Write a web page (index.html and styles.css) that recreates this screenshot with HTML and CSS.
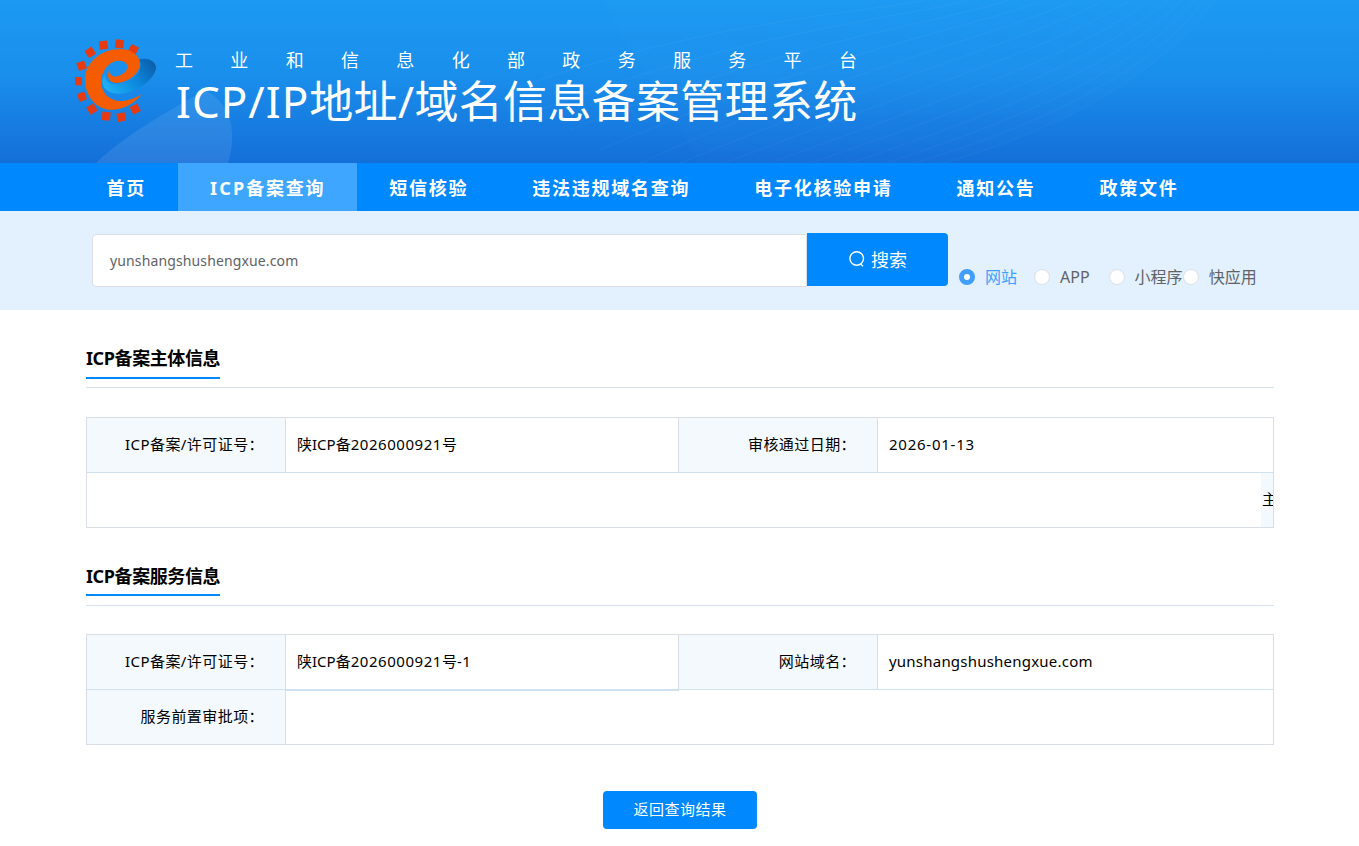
FILE: index.html
```html
<!DOCTYPE html>
<html lang="zh-CN">
<head>
    <meta charset="UTF-8">
    <title>ICP/IP地址/域名信息备案管理系统</title>
    <link rel="stylesheet" href="styles.css">
</head>
<body>
    <header class="banner">
        <svg class="banner-waves" viewBox="0 0 1359 163">
            <path d="M96 163 C125 135 170 110 205 90 C225 100 240 125 228 163 Z" fill="#fff" opacity="0.09"/>
            <path d="M1215 0 C1160 75 1060 130 943 163 L700 163 L600 0 Z" fill="#fff" opacity="0.012"/>
            <g fill="none" stroke="#fff" stroke-opacity="0.04">
                <path d="M1215 0 C1160 75 1060 130 943 163"/>
                <path d="M1205 0 C1150 70 1050 122 915 163"/>
                <path d="M1195 0 C1140 65 1035 115 885 163"/>
                <path d="M1182 0 C1125 60 1015 108 850 163"/>
                <path d="M1168 0 C1105 55 995 100 810 163"/>
                <path d="M1150 0 C1085 50 970 90 770 163"/>
                <path d="M1130 0 C1060 45 940 80 725 163"/>
                <path d="M1105 0 C1030 40 905 70 680 163"/>
                <path d="M1075 0 C1000 35 870 60 640 163"/>
                <path d="M1045 0 C965 30 830 50 600 150"/>
                <path d="M1010 0 C930 25 790 40 570 130"/>
                <path d="M970 0 C890 20 750 30 540 110"/>
                <path d="M925 0 C850 15 710 20 510 90"/>
            </g>
        </svg>
        <svg class="logo" viewBox="0 0 285 285" width="95" height="95">
            <defs>
                <linearGradient id="swoosh" x1="0" y1="0.7" x2="1" y2="0.2">
                    <stop offset="0" stop-color="#1fb0f5"/>
                    <stop offset="0.55" stop-color="#0b86dc"/>
                    <stop offset="1" stop-color="#0c5ea9"/>
                </linearGradient>
            </defs>
            <g fill="#e63a10">
                <rect x="88" y="18" width="25" height="25" transform="rotate(-8 100 30)"/>
                <rect x="136" y="14" width="25" height="25" transform="rotate(8 148 26)"/>
                <rect x="178" y="31" width="25" height="25" transform="rotate(28 190 43)"/>
                <rect x="48" y="40" width="25" height="25" transform="rotate(-35 60 52)"/>
                <rect x="22" y="80" width="25" height="25" transform="rotate(-20 34 92)"/>
                <rect x="15" y="126" width="21" height="25"/>
                <rect x="24" y="173" width="23" height="25" transform="rotate(-20 35 185)"/>
                <rect x="53" y="210" width="25" height="25" transform="rotate(-32 65 222)"/>
                <rect x="96" y="231" width="25" height="25" transform="rotate(6 108 243)"/>
                <rect x="141" y="234" width="25" height="25" transform="rotate(-10 153 246)"/>
                <rect x="183" y="210" width="25" height="25" transform="rotate(-28 195 222)"/>
            </g>
            <path d="M205 75 C225 65 255 75 258 95 C258 125 215 165 160 175 C125 180 95 165 97 135 C100 125 103 122 105 120 C105 145 130 150 150 146 C185 140 212 115 212 90 C212 82 210 78 205 75 Z" fill="url(#swoosh)"/>
            <path d="M215 178 C190 210 150 228 115 224 C70 218 44 175 45 130 C47 80 95 42 150 42 C185 42 208 60 210 85 C210 115 175 143 140 144 C120 144 107 130 118 103 C118 120 128 128 142 124 C160 118 175 105 172 92 C168 78 145 72 125 83 C100 97 88 130 95 155 C103 185 130 200 160 198 C180 196 200 188 215 178 Z" fill="#f55c00"/>
        </svg>
        <div class="banner-text">
            <div class="banner-sub">
                <span>工</span><span>业</span><span>和</span><span>信</span><span>息</span><span>化</span><span>部</span><span>政</span><span>务</span><span>服</span><span>务</span><span>平</span><span>台</span>
            </div>
            <h1><span class="latin">ICP/IP</span>地址/域名信息备案管理系统</h1>
        </div>
    </header>

    <nav class="main-nav">
        <a href="#">首页</a>
        <a href="#" class="active"><span class="latin">ICP</span>备案查询</a>
        <a href="#">短信核验</a>
        <a href="#">违法违规域名查询</a>
        <a href="#">电子化核验申请</a>
        <a href="#">通知公告</a>
        <a href="#">政策文件</a>
    </nav>

    <section class="search-band">
        <div class="search-input">yunshangshushengxue.com</div>
        <button class="search-btn">
            <svg viewBox="0 0 18 18" width="18" height="18">
                <circle cx="8.7" cy="8.5" r="6.8" fill="none" stroke="#fff" stroke-width="1.4"/>
                <path d="M12.6 14 L15 16.2" stroke="#fff" stroke-width="1.4" fill="none"/>
            </svg>
            搜索
        </button>
        <div class="radios">
            <label class="radio checked"><i></i>网站</label>
            <label class="radio"><i></i>APP</label>
            <label class="radio"><i></i>小程序</label>
            <label class="radio"><i></i>快应用</label>
        </div>
    </section>

    <main class="content">
        <div class="section-title"><h2>ICP备案主体信息</h2></div>
        <div class="info-table">
            <div class="row">
                <div class="cell-label">ICP备案/许可证号：</div>
                <div class="cell-value short">陕ICP备<span class="num">2026000921</span>号</div>
                <div class="cell-label">审核通过日期：</div>
                <div class="cell-value"><span class="date">2026-01-13</span></div>
            </div>
            <div class="row clipped">
                <div class="cell-empty"></div>
                <div class="cell-label overflow">主办单位名称：</div>
            </div>
        </div>

        <div class="section-title second"><h2>ICP备案服务信息</h2></div>
        <div class="info-table">
            <div class="row">
                <div class="cell-label">ICP备案/许可证号：</div>
                <div class="cell-value short thick">陕ICP备<span class="num">2026000921</span>号<span class="num">-1</span></div>
                <div class="cell-label">网站域名：</div>
                <div class="cell-value"><span class="domain">yunshangshushengxue.com</span></div>
            </div>
            <div class="row">
                <div class="cell-label">服务前置审批项：</div>
                <div class="cell-value"></div>
            </div>
        </div>

        <div class="back-wrap"><button class="back-btn">返回查询结果</button></div>
    </main>
</body>
</html>
```

FILE: styles.css
```css
* {
    margin: 0;
    padding: 0;
    box-sizing: border-box;
}

body {
    font-family: "Noto Sans", "Noto Sans CJK SC", sans-serif;
    color: #000;
    background: #fff;
}

/* Banner */
.banner {
    position: relative;
    height: 163px;
    padding: 35px 0 0 70px;
    display: flex;
    background: linear-gradient(180deg, #1b99f3 0%, #1a8fec 45%, #146fd9 100%);
    overflow: hidden;
}

.banner-waves {
    position: absolute;
    left: 0;
    top: 0;
    width: 1359px;
    height: 163px;
}

.logo {
    position: relative;
    flex-shrink: 0;
}

.banner-text {
    position: relative;
    width: 682px;
    margin-left: 10px;
    color: #fff;
}

.banner-sub {
    display: flex;
    justify-content: space-between;
    font-size: 18px;
    line-height: 26px;
    margin-top: 12px;
}

.banner-text h1 {
    padding-left: 1px;
    font-size: 44px;
    font-weight: 400;
    line-height: 56px;
    letter-spacing: 0.3px;
    white-space: nowrap;
}

.banner-text h1 .latin {
    letter-spacing: 1px;
}

/* Nav */
.main-nav {
    height: 48px;
    padding-left: 74.5px;
    display: flex;
    background: #0088ff;
}

.main-nav a {
    padding: 0 32px;
    font-size: 18px;
    font-weight: 700;
    line-height: 50px;
    letter-spacing: 1.75px;
    color: #fff;
    text-decoration: none;
}

.main-nav a.active {
    background: #3fa6ff;
}

.main-nav .latin {
    letter-spacing: 2.2px;
}

/* Search */
.search-band {
    height: 99px;
    padding: 22px 0 0 92px;
    display: flex;
    align-items: flex-start;
    background: #e3f1ff;
}

.search-input {
    width: 715px;
    height: 53px;
    margin-top: 1px;
    padding-left: 17px;
    font-size: 14px;
    letter-spacing: 0.13px;
    line-height: 51px;
    color: #606266;
    background: #fff;
    border: 1px solid #dcdfe6;
    border-radius: 4px 0 0 4px;
}

.search-btn {
    width: 141px;
    height: 53px;
    padding-bottom: 2px;
    display: flex;
    align-items: center;
    justify-content: center;
    gap: 5px;
    font-family: inherit;
    font-size: 18px;
    color: #fff;
    background: #0088ff;
    border: none;
    border-radius: 0 4px 4px 0;
}

.radios {
    display: flex;
    margin: 33px 0 0 11px;
}

.radio {
    display: flex;
    align-items: center;
    margin-right: 17px;
    font-size: 16px;
    line-height: 22px;
    color: #606266;
}

.radio:nth-child(2) {
    margin-right: 19px;
}

.radio:nth-child(3) {
    margin-right: 0;
}

.radio i {
    width: 16px;
    height: 16px;
    margin-right: 10px;
    background: #fff;
    border: 1px solid #dcdfe6;
    border-radius: 50%;
}

.radio.checked {
    color: #409eff;
}

.radio.checked i {
    background: #fff;
    border: 5px solid #409eff;
}

/* Sections */
.content {
    padding: 0 85px 0 86px;
}

.section-title {
    height: 78px;
    padding-top: 34px;
    border-bottom: 1px solid #d5dfee;
}

.section-title h2 {
    display: inline-block;
    height: 35px;
    font-size: 18px;
    line-height: 28px;
    font-weight: 700;
    letter-spacing: -0.4px;
    border-bottom: 2px solid #0088ff;
}

.section-title.second h2 {
    height: 34px;
}

.section-title.second + .info-table {
    margin-top: 28px;
}

.info-table {
    margin-top: 29px;
    border: 1px solid #d8dee4;
    border-bottom: none;
    font-size: 15px;
}

.row {
    display: flex;
    height: 55px;
    border-bottom: 1px solid #cfe0ee;
    line-height: 52px;
}

.row:last-child {
    border-bottom-color: #d8dee4;
}

.cell-label {
    flex: 0 0 199px;
    padding-right: 21px;
    letter-spacing: 0.43px;
    text-align: right;
    white-space: nowrap;
    background: #f4f9fd;
    border-right: 1px solid #d8dee4;
}

.cell-value {
    flex: 1;
    padding-left: 11px;
}

.cell-value.short {
    flex: 0 0 393px;
    border-right: 1px solid #d8dee4;
}

.cell-value.thick {
    border-bottom: 2px solid #cfe0ee;
    height: 56px;
}

.num {
    letter-spacing: 0.55px;
}

.date {
    letter-spacing: 0.75px;
}

.domain {
    letter-spacing: 0.22px;
}

/* The second row of the first table runs off the right edge */
.clipped {
    overflow: hidden;
}

.cell-empty {
    flex: 0 0 1174px;
}

.cell-label.overflow {
    padding: 0 0 0 1px;
    text-align: left;
    border-right: none;
}

.back-wrap {
    display: flex;
    justify-content: center;
    margin: 46px 0 17px;
}

.back-btn {
    width: 154px;
    height: 38px;
    padding-bottom: 3px;
    font-family: inherit;
    font-size: 15px;
    letter-spacing: 0.5px;
    color: #fff;
    background: #0088ff;
    border: none;
    border-radius: 4px;
}
```
